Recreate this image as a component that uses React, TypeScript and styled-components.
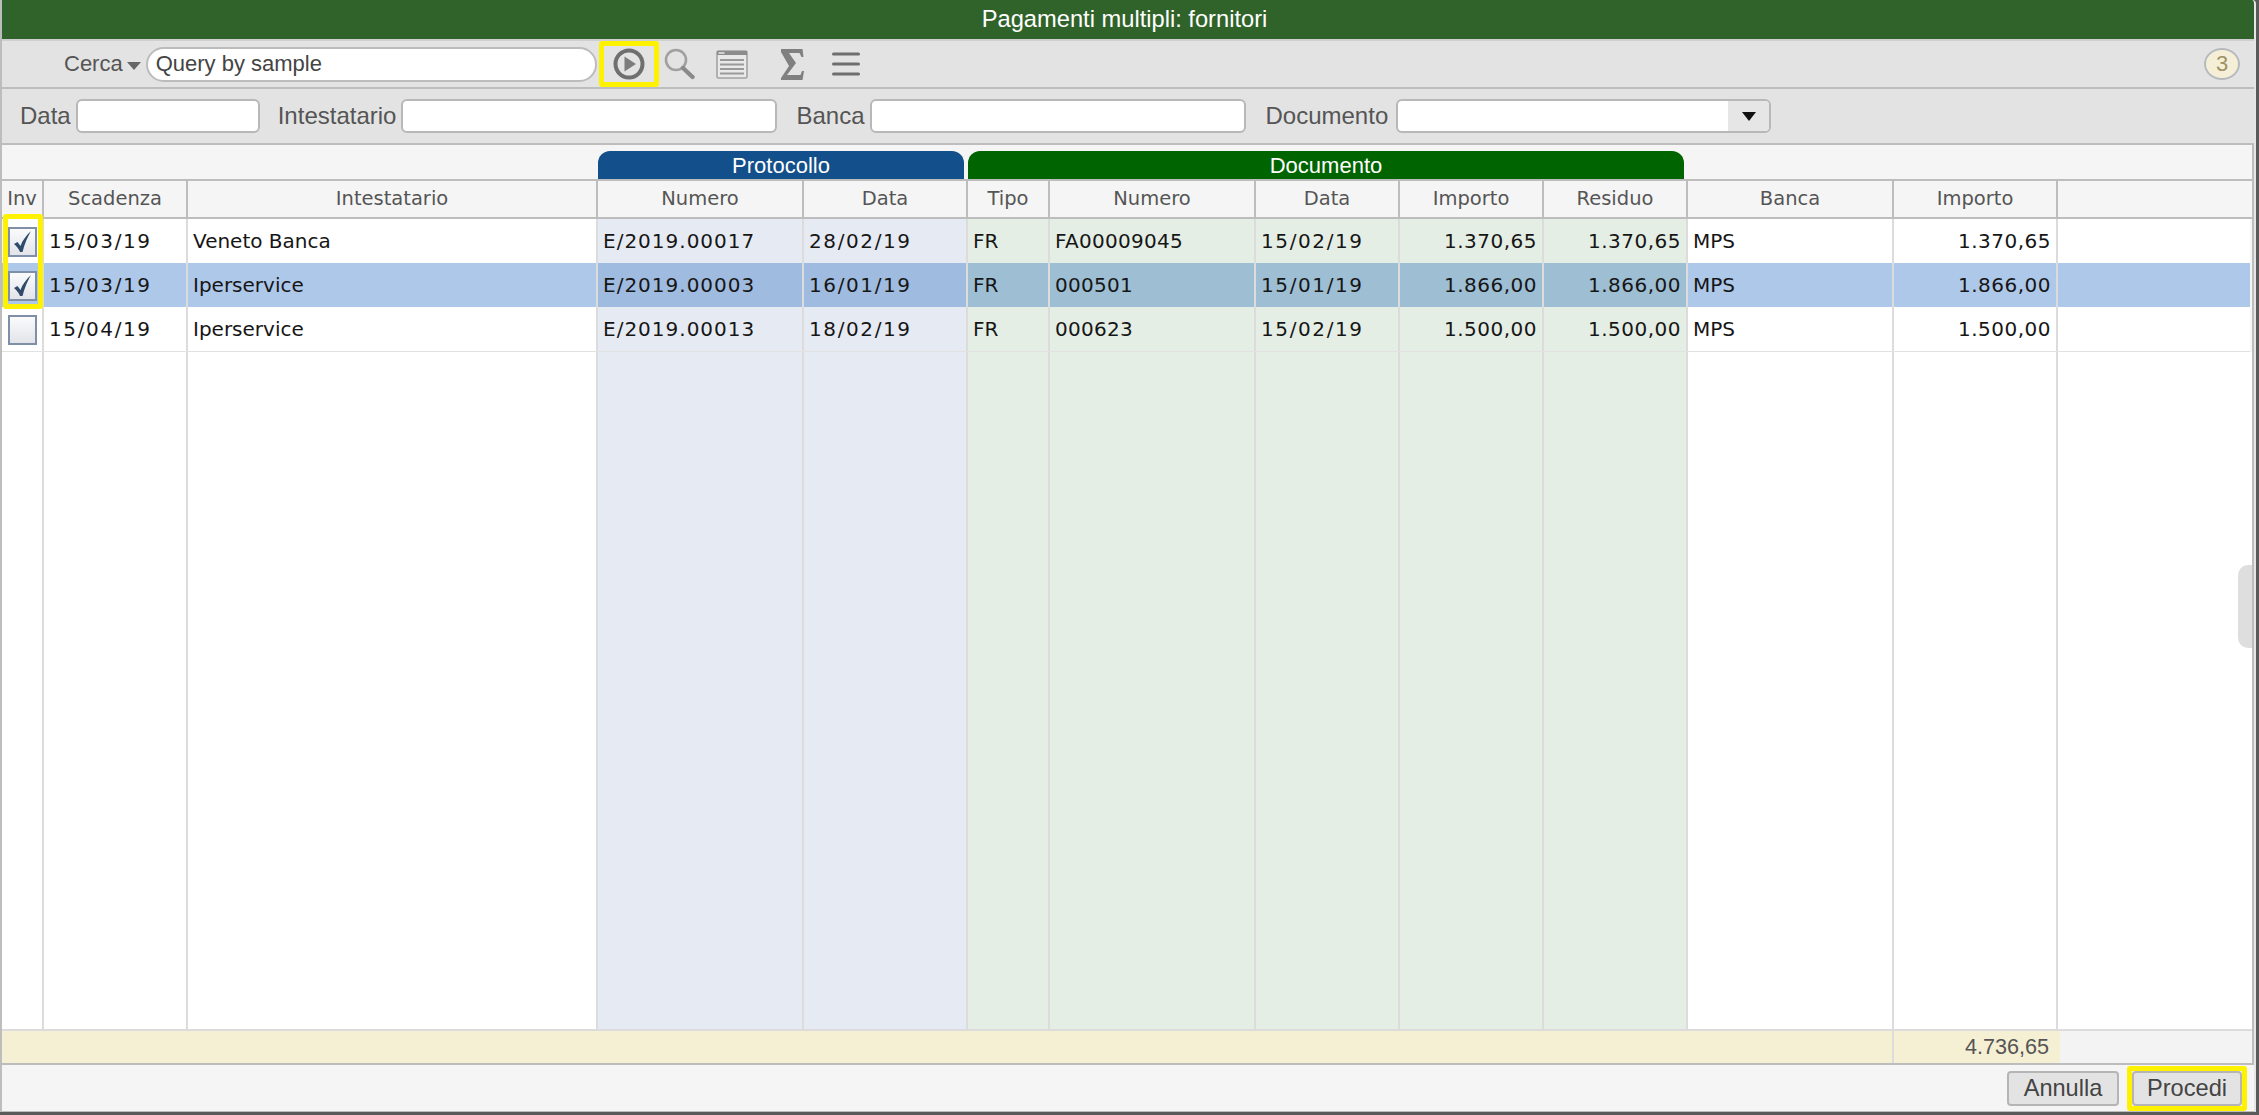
import React from "react";
import styled, { createGlobalStyle } from "styled-components";

const Global = createGlobalStyle`
  html, body { margin: 0; padding: 0; background: #5a5a5a; overflow: hidden; }
  * { box-sizing: border-box; }
`;

const HELV = `"Liberation Sans", Arial, sans-serif`;
const LUC = `"DejaVu Sans", Verdana, sans-serif`;
const COLS = "42px 144px 410px 206px 164px 82px 206px 144px 144px 144px 206px 164px 1fr";

const Page = styled.div`
  width: 2259px;
  height: 1115px;
  background: #5a5a5a;
  padding: 0 3px 3px 0;
`;
const Window = styled.div`
  position: relative;
  width: 100%;
  height: 100%;
  display: flex;
  flex-direction: column;
  border-left: 2px solid #bdbdbd;
  border-right: 2px solid #e6e6e6;
  border-bottom: 1px solid #bdbdbd;
  border-top-right-radius: 4px;
  background: #f5f5f5;
  overflow: hidden;
`;
const TitleBar = styled.div`
  height: 39px;
  flex: none;
  padding-right: 7px;
  background: #306329;
  color: #fff;
  font: 23.7px/39px ${HELV};
  text-align: center;
`;
const Toolbar = styled.div`
  height: 50px;
  flex: none;
  display: flex;
  align-items: center;
  padding-left: 62px;
  background: #e3e3e3;
  border-top: 2px solid #cfcfcf;
  border-bottom: 2px solid #bdbdbd;
`;
const CercaLabel = styled.span`
  font: 22px ${HELV};
  color: #555;
`;
const Caret = styled.span`
  width: 0;
  height: 0;
  margin: 3px 5px 0 4px;
  border-left: 7px solid transparent;
  border-right: 7px solid transparent;
  border-top: 8px solid #666;
`;
const SearchField = styled.div`
  width: 451px;
  height: 35px;
  padding-left: 8px;
  background: #fff;
  border: 2px solid #bcbcbc;
  border-radius: 18px;
  font: 22px/29px ${HELV};
  color: #444;
`;
const PlayFrame = styled.div`
  width: 60px;
  height: 46px;
  margin-left: 2px;
  display: flex;
  align-items: center;
  justify-content: center;
  border: 5px solid #fff200;
  border-radius: 3px;
`;
const IconSlot = styled.span<{ $left: number }>`
  display: flex;
  margin-left: ${(p) => p.$left}px;
`;
const Badge = styled.div`
  width: 36px;
  height: 32px;
  margin-left: auto;
  margin-right: 14px;
  border: 2px solid #b6babc;
  border-radius: 50%;
  background: #f5efd8;
  color: #9c9266;
  font: 22px/28px ${HELV};
  text-align: center;
`;
const FilterBar = styled.div`
  height: 56px;
  flex: none;
  display: flex;
  align-items: center;
  padding-left: 18px;
  background: #e3e3e3;
  border-bottom: 2px solid #bdbdbd;
`;
const FilterLabel = styled.label<{ $left?: number; $gap?: number }>`
  margin-left: ${(p) => p.$left ?? 0}px;
  margin-right: ${(p) => p.$gap ?? 5}px;
  font: 24px ${HELV};
  color: #555;
`;
const Input = styled.input<{ $w: number }>`
  width: ${(p) => p.$w}px;
  height: 34px;
  padding: 0;
  background: #fff;
  border: 2px solid #b8b8b8;
  border-radius: 6px;
  outline: none;
`;
const SelectBox = styled.div`
  width: 375px;
  height: 34px;
  display: flex;
  justify-content: flex-end;
  background: #fff;
  border: 2px solid #b8b8b8;
  border-radius: 6px;
  overflow: hidden;
`;
const SelectArrow = styled.span`
  width: 41px;
  display: flex;
  align-items: center;
  justify-content: center;
  background: #e6e6e6;
  &::after {
    content: "";
    border-left: 7px solid transparent;
    border-right: 7px solid transparent;
    border-top: 9px solid #111;
  }
`;
const TableArea = styled.div`
  position: relative;
  flex: 1;
  display: flex;
  flex-direction: column;
  min-height: 0;
  border-right: 2px solid #bdbdbd;
`;
const GroupBand = styled.div`
  height: 36px;
  flex: none;
  display: grid;
  grid-template-columns: ${COLS};
  align-items: end;
  background: #f5f5f5;
  border-bottom: 2px solid #bdbdbd;
`;
const GroupTab = styled.div<{ $start: number; $end: number; $bg: string }>`
  grid-column: ${(p) => p.$start} / ${(p) => p.$end};
  height: 28px;
  margin-right: 4px;
  background: ${(p) => p.$bg};
  border-radius: 12px 12px 0 0;
  color: #fff;
  font: 22px/29px ${HELV};
  text-align: center;
`;
const HeaderRow = styled.div`
  height: 38px;
  flex: none;
  display: grid;
  grid-template-columns: ${COLS};
  background: #f5f5f5;
  border-bottom: 2px solid #bdbdbd;
`;
const HeaderCell = styled.div`
  border-right: 2px solid #bdbdbd;
  font: 19.5px/35px ${LUC};
  color: #555;
  text-align: center;
  &:last-child { border-right: none; }
`;
const Row = styled.div<{ $sel?: boolean; $last?: boolean }>`
  height: ${(p) => (p.$last ? 45 : 44)}px;
  flex: none;
  display: grid;
  grid-template-columns: ${COLS};
  margin-right: 2px;
  background: ${(p) => (p.$sel ? "#aec8e9" : "#fff")};
  border-bottom: ${(p) => (p.$last ? "1px solid #e2e2e2" : "none")};
`;
const Filler = styled.div`
  flex: 1;
  min-height: 0;
  display: grid;
  grid-template-columns: ${COLS};
  background: #fff;
`;
type Tone = "plain" | "blue" | "green";
const toneBg = (t: Tone, sel?: boolean) => {
  if (t === "blue") return sel ? "#9fbbdf" : "#e6eaf3";
  if (t === "green") return sel ? "#9dbed3" : "#e5eee5";
  return "transparent";
};
const Cell = styled.div<{ $tone: Tone; $sel?: boolean; $right?: boolean; $ls?: number }>`
  padding: 0 5px;
  background: ${(p) => toneBg(p.$tone, p.$sel)};
  border-right: 2px solid #dcdcdc;
  font: 20px/45px ${LUC};
  letter-spacing: ${(p) => p.$ls ?? 0}px;
  color: #161616;
  white-space: nowrap;
  overflow: hidden;
  text-align: ${(p) => (p.$right ? "right" : "left")};
  &:last-child { border-right: none; }
`;
const CheckCell = styled.div`
  display: flex;
  align-items: center;
  justify-content: center;
  border-right: 2px solid #dcdcdc;
`;
const CheckBox = styled.span`
  width: 29px;
  height: 30px;
  margin-top: 1px;
  display: flex;
  align-items: center;
  justify-content: center;
  border: 2px solid #7f8fa8;
  background: linear-gradient(#fbfbfc, #e2e4e9);
`;
const CheckHighlight = styled.div`
  position: absolute;
  left: 1px;
  top: 69px;
  width: 40px;
  height: 95px;
  border: 5px solid #fff200;
  border-radius: 3px;
  pointer-events: none;
`;
const TotalRow = styled.div`
  height: 36px;
  flex: none;
  display: grid;
  grid-template-columns: ${COLS};
  background: #f3f3f3;
  border-top: 2px solid #dcdcdc;
  border-bottom: 2px solid #bdbdbd;
`;
const TotalSpacer = styled.div`
  grid-column: 1 / 12;
  background: #f5efd3;
  border-right: 2px solid #dcdcdc;
`;
const TotalValue = styled.div`
  background: #f5efd3;
  padding-right: 11px;
  margin-right: -2px;
  font: 21.6px/31px ${HELV};
  color: #555;
  text-align: right;
`;
const ActionBar = styled.div`
  height: 46px;
  flex: none;
  display: flex;
  align-items: center;
  justify-content: flex-end;
  padding-right: 7px;
  background: #f5f5f5;
`;
const Button = styled.button<{ $w: number }>`
  width: ${(p) => p.$w}px;
  height: 35px;
  padding: 0;
  background: #e3e3e3;
  border: 2px solid #b5b5b5;
  border-radius: 4px;
  font: 23.6px ${HELV};
  color: #444;
`;
const PrimaryFrame = styled.div`
  margin: 1px 0 0 8px;
  width: 120px;
  height: 45px;
  display: flex;
  align-items: center;
  justify-content: center;
  border: 5px solid #fff200;
  border-radius: 3px;
`;
const ScrollHandle = styled.div`
  position: absolute;
  right: -4px;
  top: 565px;
  width: 20px;
  height: 83px;
  background: rgba(190, 190, 190, 0.5);
  border-radius: 10px 0 0 10px;
`;

const tones: Tone[] = ["plain", "plain", "plain", "blue", "blue", "green", "green", "green", "green", "green", "plain", "plain", "plain"];
const spacing = [0, 1.6, 0, 1, 1.6, 0, 0.3, 1.6, 0.5, 0.5, 0, 0.5, 0];
const headers = ["Inv", "Scadenza", "Intestatario", "Numero", "Data", "Tipo", "Numero", "Data", "Importo", "Residuo", "Banca", "Importo", ""];
const rightCols = new Set([8, 9, 11]);
const rows = [
  { checked: true, sel: false, cells: ["15/03/19", "Veneto Banca", "E/2019.00017", "28/02/19", "FR", "FA00009045", "15/02/19", "1.370,65", "1.370,65", "MPS", "1.370,65", ""] },
  { checked: true, sel: true, cells: ["15/03/19", "Iperservice", "E/2019.00003", "16/01/19", "FR", "000501", "15/01/19", "1.866,00", "1.866,00", "MPS", "1.866,00", ""] },
  { checked: false, sel: false, cells: ["15/04/19", "Iperservice", "E/2019.00013", "18/02/19", "FR", "000623", "15/02/19", "1.500,00", "1.500,00", "MPS", "1.500,00", ""] },
];

const PlayIcon = () => (
  <svg width="34" height="34" viewBox="0 0 34 34">
    <circle cx="17" cy="17" r="13.5" fill="none" stroke="#6f6f6f" strokeWidth="4" />
    <path d="M12.5 9.5 L24 17 L12.5 24.5 Z" fill="#7d7d7d" />
  </svg>
);
const SearchIcon = () => (
  <svg width="32" height="32" viewBox="0 0 32 32">
    <circle cx="13" cy="12" r="10" fill="none" stroke="#a0a0a0" strokeWidth="2.6" />
    <path d="M20 20 L29.5 29" stroke="#8a8a8a" strokeWidth="4.4" strokeLinecap="round" />
  </svg>
);
const ListIcon = () => (
  <svg width="32" height="29" viewBox="0 0 32 29">
    <rect x="1" y="1" width="30" height="27" rx="1.5" fill="#e9e9e9" stroke="#a3a3a3" strokeWidth="1.6" />
    <rect x="1" y="1" width="30" height="4" fill="#8c8c8c" />
    <rect x="2.5" y="2" width="6" height="2" fill="#cfcfcf" />
    <path d="M4 10 H28 M4 14.5 H28 M4 19 H28 M4 23.5 H28" stroke="#9a9a9a" strokeWidth="2" />
  </svg>
);
const SigmaIcon = () => (
  <svg width="24" height="33" viewBox="0 0 24 33">
    <path d="M1 1 H22.5 L23.5 9 H21.5 L19.5 5 H9 L16 15 L7 27 H20.5 L22 23 H24 L22.5 32 H1 V30 L9 18 L1 4 Z" fill="#808080" />
  </svg>
);
const MenuIcon = () => (
  <svg width="28" height="24" viewBox="0 0 28 24">
    <path d="M1.5 2 H26.5 M1.5 12 H26.5 M1.5 22 H26.5" stroke="#6e6e6e" strokeWidth="3" strokeLinecap="round" />
  </svg>
);
const CheckMark = () => (
  <svg width="22" height="24" viewBox="0 0 22 24">
    <path d="M3 14 L6.5 12 L9.5 16 C11.5 10 15 6 20 1 C16.5 7 13.5 14 11.5 22 L9 22 C8 19 5.5 16 3 14 Z" fill="#2f4a6b" />
  </svg>
);

export default function App() {
  return (
    <Page>
      <Global />
      <Window>
        <TitleBar>Pagamenti multipli: fornitori</TitleBar>
        <Toolbar>
          <CercaLabel>Cerca</CercaLabel>
          <Caret />
          <SearchField>Query by sample</SearchField>
          <PlayFrame><PlayIcon /></PlayFrame>
          <IconSlot $left={4}><SearchIcon /></IconSlot>
          <IconSlot $left={21}><ListIcon /></IconSlot>
          <IconSlot $left={32}><SigmaIcon /></IconSlot>
          <IconSlot $left={28}><MenuIcon /></IconSlot>
          <Badge>3</Badge>
        </Toolbar>
        <FilterBar>
          <FilterLabel>Data</FilterLabel>
          <Input $w={184} />
          <FilterLabel $left={18}>Intestatario</FilterLabel>
          <Input $w={376} />
          <FilterLabel $left={19}>Banca</FilterLabel>
          <Input $w={376} />
          <FilterLabel $left={20} $gap={8}>Documento</FilterLabel>
          <SelectBox><SelectArrow /></SelectBox>
        </FilterBar>
        <TableArea>
          <GroupBand>
            <GroupTab $start={4} $end={6} $bg="#134f8a">Protocollo</GroupTab>
            <GroupTab $start={6} $end={11} $bg="#006400">Documento</GroupTab>
          </GroupBand>
          <HeaderRow>
            {headers.map((h, i) => (
              <HeaderCell key={i}>{h}</HeaderCell>
            ))}
          </HeaderRow>
          {rows.map((r, ri) => (
            <Row key={ri} $sel={r.sel} $last={ri === rows.length - 1}>
              <CheckCell>
                <CheckBox>{r.checked && <CheckMark />}</CheckBox>
              </CheckCell>
              {r.cells.map((c, i) => (
                <Cell key={i} $tone={tones[i + 1]} $sel={r.sel} $right={rightCols.has(i + 1)} $ls={spacing[i + 1]}>
                  {c}
                </Cell>
              ))}
            </Row>
          ))}
          <Filler>
            {tones.map((t, i) => (
              <Cell key={i} $tone={t} />
            ))}
          </Filler>
          <TotalRow>
            <TotalSpacer />
            <TotalValue>4.736,65</TotalValue>
          </TotalRow>
          <CheckHighlight />
        </TableArea>
        <ActionBar>
          <Button $w={112}>Annulla</Button>
          <PrimaryFrame>
            <Button $w={110}>Procedi</Button>
          </PrimaryFrame>
        </ActionBar>
        <ScrollHandle />
      </Window>
    </Page>
  );
}
